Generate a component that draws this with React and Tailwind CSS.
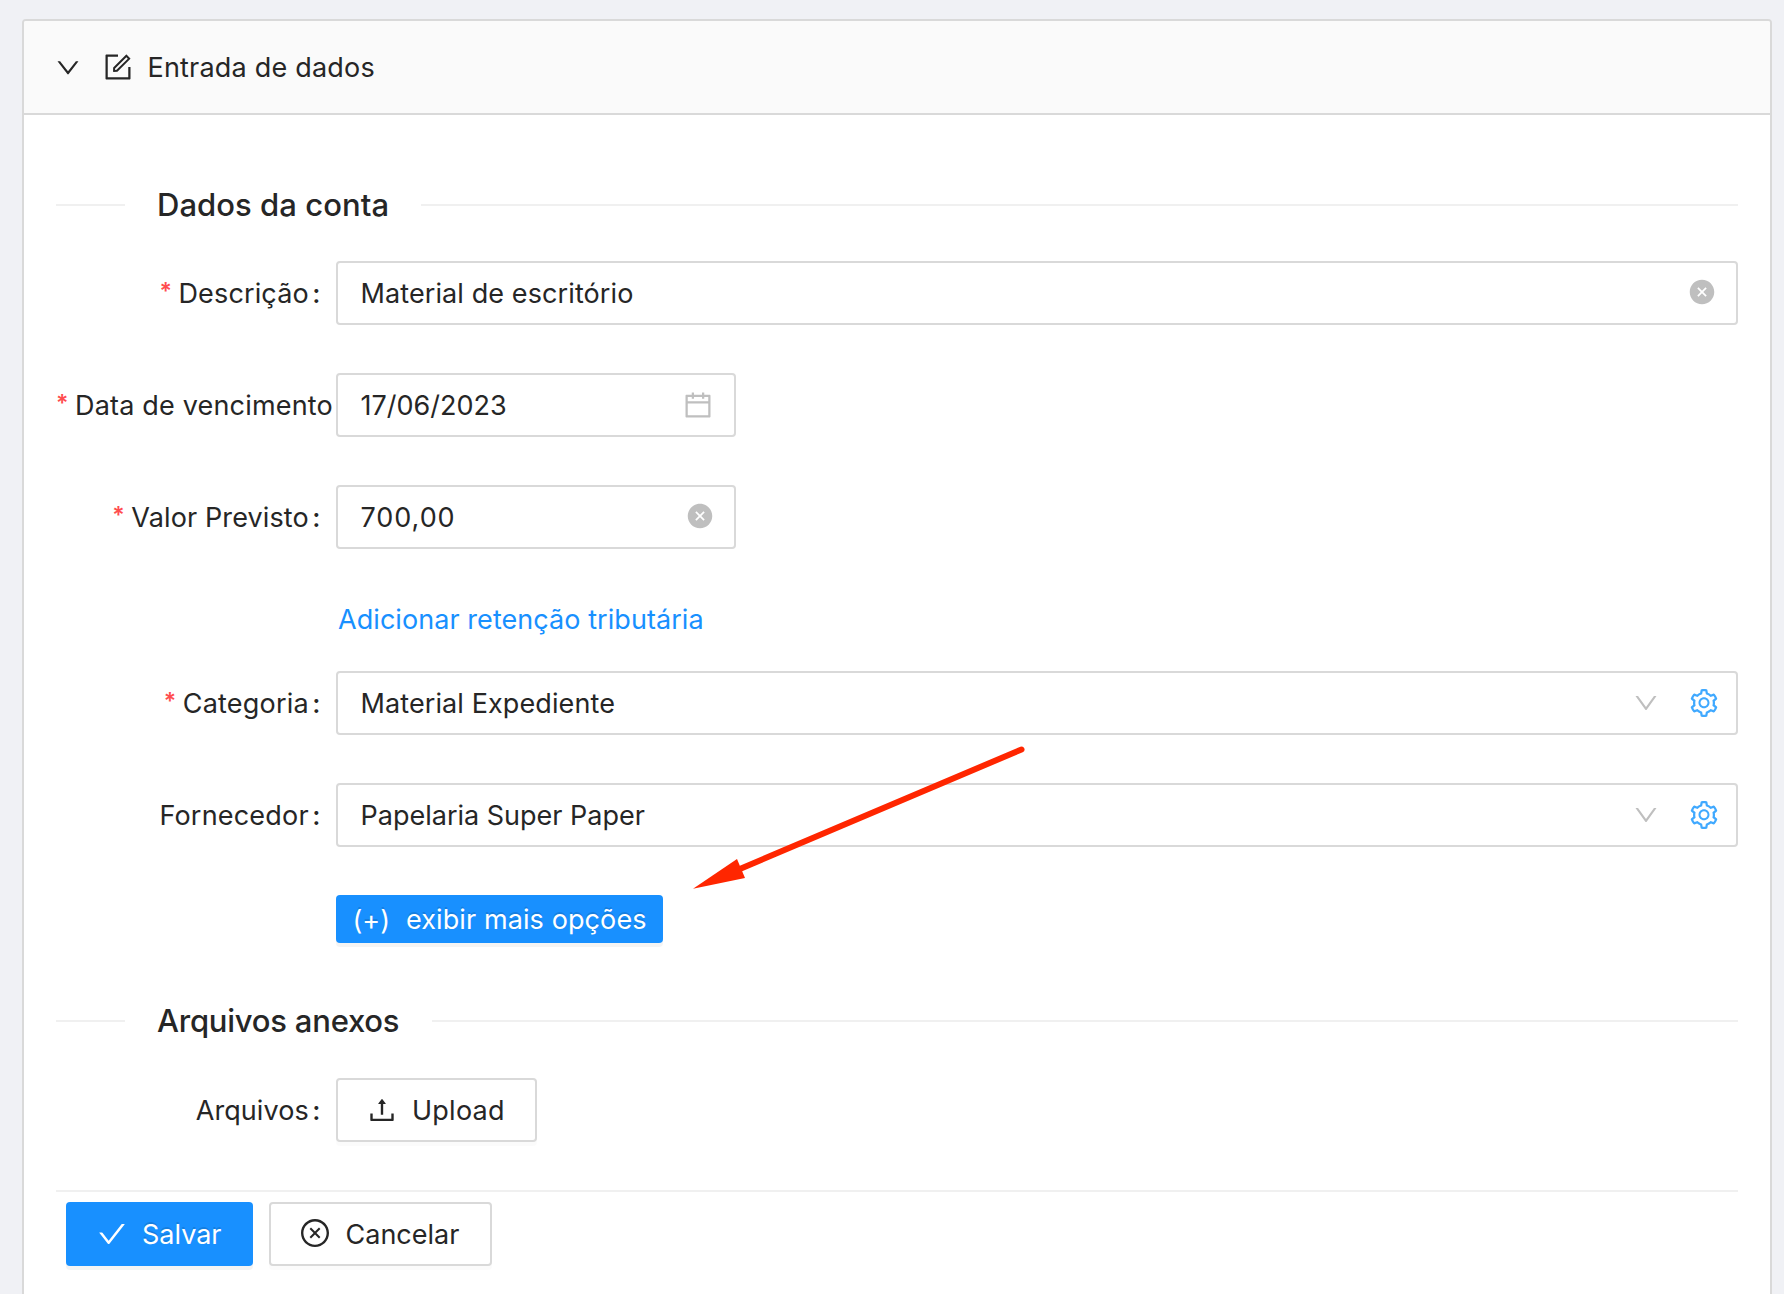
import {
  AiFillCloseCircle,
  AiOutlineCalendar,
  AiOutlineCheck,
  AiOutlineCloseCircle,
  AiOutlineDown,
  AiOutlineForm,
  AiOutlineRight,
  AiOutlineSetting,
  AiOutlineUpload,
} from "react-icons/ai";

function SectionTitle({ children, className = "", textClass }) {
  return (
    <div className={`flex h-[44px] items-center ${className}`}>
      <div className="h-[2px] w-[69px] shrink-0 bg-[#f0f0f0]" />
      <h2 className={`shrink-0 pl-[32px] text-[31px] leading-[44px] font-[530] whitespace-nowrap ${textClass}`}>
        {children}
      </h2>
      <div className="h-[2px] flex-1 bg-[#f0f0f0]" />
    </div>
  );
}

function Row({ label, labelClass = "", required, colon = true, className = "", children }) {
  return (
    <div className={`flex h-[64px] items-center ${className}`}>
      <div
        className={`flex w-[280px] shrink-0 items-center overflow-hidden pt-[2px] whitespace-nowrap ${colon ? "justify-end" : "justify-start"}`}
      >
        {required && (
          <span className="w-[19px] shrink-0 pb-[6px] text-[23px] leading-[38px] font-semibold text-[#ff4d4f]">
            *
          </span>
        )}
        <span className={labelClass}>{label}</span>
        {colon && <span className="mr-[15.5px] ml-[3.5px] font-medium">:</span>}
      </div>
      {children}
    </div>
  );
}

function Field({ children, className = "flex-1" }) {
  return (
    <div
      className={`flex h-[64px] items-center rounded-[4px] border-2 border-[#d9d9d9] bg-white pl-[22.5px] ${className}`}
    >
      {children}
    </div>
  );
}

function SelectField({ value, valueClass }) {
  return (
    <Field>
      <span className={`flex-1 pt-[2px] ${valueClass}`}>{value}</span>
      <AiOutlineDown className="mr-[28px] size-[28px] text-[#bfbfbf]" />
      <AiOutlineSetting className="mr-[16px] size-[32px] text-[#40a9ff]" />
    </Field>
  );
}

export default function App() {
  return (
    <div className="h-[1294px] w-[1784px] overflow-hidden bg-[#f0f1f5] pt-[19px] pl-[22px] font-['Inter',sans-serif] text-[27px] leading-[44px] font-[430] text-[#262626]">
      <div className="relative h-[1400px] w-[1750px] rounded-[4px] border-2 border-[#d9d9d9] bg-white">
        <div className="flex h-[94px] items-center rounded-t-[2px] border-b-2 border-[#d9d9d9] bg-[#fafafa] pl-[30px]">
          <AiOutlineRight className="size-[28px] rotate-90" />
          <AiOutlineForm className="ml-[20px] size-[32px]" />
          <span className="ml-[13.5px] pt-[2px] tracking-[0.2px]">Entrada de dados</span>
        </div>

        <div className="px-[32px] pt-[68px]">
          <SectionTitle textClass="tracking-[0.05px] w-[296px]">Dados da conta</SectionTitle>

          <Row label="Descrição" labelClass="tracking-[0.14px]" required className="mt-[34px]">
            <Field>
              <span className="flex-1 pt-[2px] tracking-[0.1px]">Material de escritório</span>
              <AiFillCloseCircle className="mr-[20px] mb-[2px] size-[28px] text-[#bfbfbf]" />
            </Field>
          </Row>

          <Row
            label="Data de vencimento"
            labelClass="tracking-[0.18px]"
            required
            colon={false}
            className="mt-[48px]"
          >
            <Field className="w-[400px]">
              <span className="flex-1 pt-[2px]">17/06/2023</span>
              <AiOutlineCalendar className="mr-[20px] size-[32px] text-[#bfbfbf]" />
            </Field>
          </Row>

          <Row label="Valor Previsto" labelClass="tracking-[0.12px]" required className="mt-[48px]">
            <Field className="w-[400px]">
              <span className="flex-1 pt-[2px] tracking-[0.95px]">700,00</span>
              <AiFillCloseCircle className="mr-[20px] mb-[2px] size-[28px] text-[#bfbfbf]" />
            </Field>
          </Row>

          <a className="mt-[49px] ml-[282px] block h-[44px] tracking-[0.06px] text-[#1890ff]">
            Adicionar retenção tributária
          </a>

          <Row label="Categoria" labelClass="tracking-[0.2px]" required className="mt-[29px]">
            <SelectField value="Material Expediente" valueClass="tracking-[0.1px]" />
          </Row>

          <Row label="Fornecedor" labelClass="tracking-[0.2px]" className="mt-[48px]">
            <SelectField value="Papelaria Super Paper" valueClass="tracking-[0px]" />
          </Row>

          <button className="mt-[48px] ml-[280px] flex h-[48px] w-[327px] items-center rounded-[4px] bg-[#1890ff] pt-[2px] pl-[16.5px] whitespace-nowrap text-white shadow-[0_4px_0_rgba(0,0,0,0.045)] text-shadow-[0_-2px_0_rgba(0,0,0,0.12)]">
            <span className="w-[53.5px] pt-[2px] text-left">(+)</span>
            <span className="tracking-[0.1px]">exibir mais opções</span>
          </button>

          <SectionTitle className="mt-[56px]" textClass="-tracking-[0.23px] w-[307px]">
            Arquivos anexos
          </SectionTitle>

          <Row label="Arquivos" labelClass="tracking-[0.08px]" className="mt-[35px]">
            <button className="flex h-[64px] w-[201px] items-center rounded-[4px] border-2 border-[#d9d9d9] bg-white pl-[28px] shadow-[0_4px_0_rgba(0,0,0,0.015)]">
              <AiOutlineUpload className="size-[32px]" />
              <span className="ml-[14px] pt-[2px] tracking-[0.25px]">Upload</span>
            </button>
          </Row>

          <div className="mt-[48px] h-[2px] bg-[#f0f0f0]" />

          <div className="mt-[10px] flex gap-[16px] pl-[10px]">
            <button className="flex h-[64px] w-[187px] items-center rounded-[4px] bg-[#1890ff] pl-[30px] text-white shadow-[0_4px_0_rgba(0,0,0,0.045)] text-shadow-[0_-2px_0_rgba(0,0,0,0.12)]">
              <AiOutlineCheck className="size-[32px]" />
              <span className="ml-[14px] pt-[2px]">Salvar</span>
            </button>
            <button className="flex h-[64px] w-[223px] items-center rounded-[4px] border-2 border-[#d9d9d9] bg-white pl-[28px] shadow-[0_4px_0_rgba(0,0,0,0.015)]">
              <AiOutlineCloseCircle className="mb-[2px] size-[32px]" />
              <span className="ml-[14.5px] pt-[2px]">Cancelar</span>
            </button>
          </div>
        </div>

        <svg
          className="absolute top-[719px] left-[666px]"
          width="344"
          height="160"
          viewBox="0 0 344 160"
          fill="#ff2600"
        >
          <path d="M51 128.5 331.5 9.5" stroke="#ff2600" strokeWidth="6" strokeLinecap="round" />
          <path d="M3 148.8 47 119 55 138Z" />
        </svg>
      </div>
    </div>
  );
}
